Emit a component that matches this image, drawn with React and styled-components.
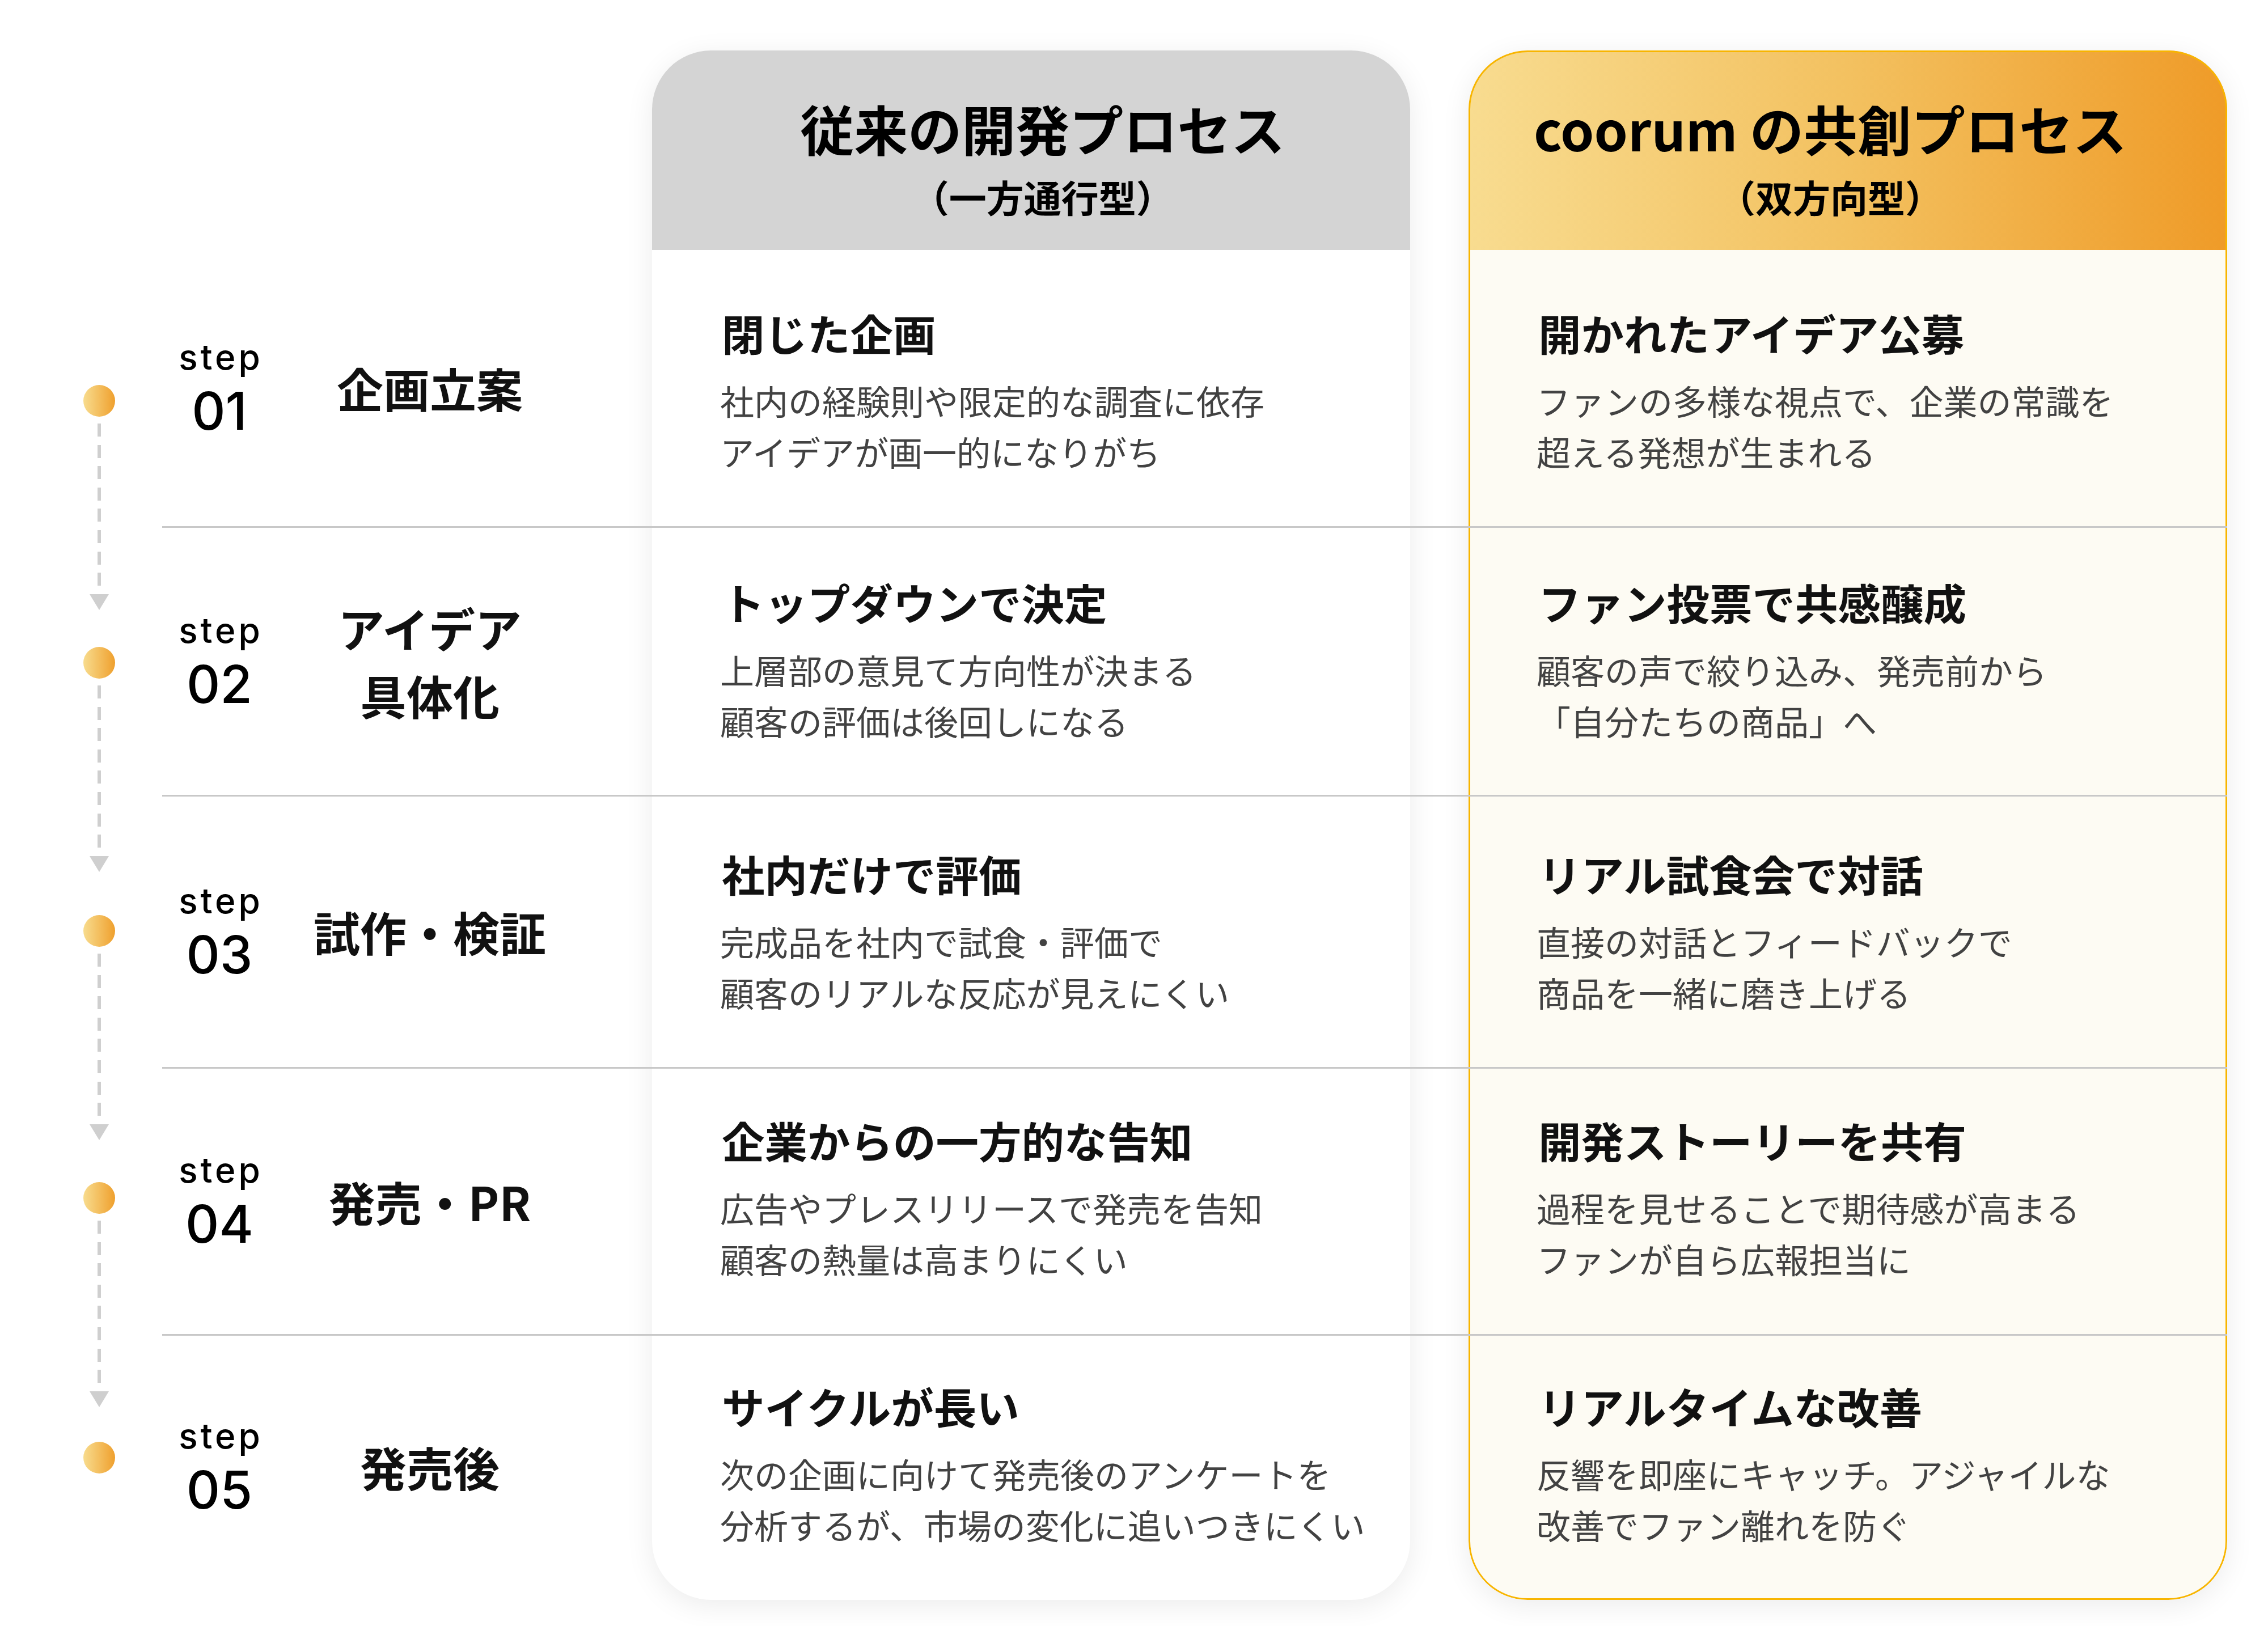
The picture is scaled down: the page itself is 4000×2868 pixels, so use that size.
import React from "react"
import styled, { createGlobalStyle } from "styled-components"

const ROWS = [352, 490, 474, 480, 471, 466]

const steps = [
    {
        no: "01",
        label: ["企画立案"],
        dotTop: 238,
        pad: 89,
        old: { title: "閉じた企画", lines: ["社内の経験則や限定的な調査に依存", "アイデアが画一的になりがち"] },
        next: { title: "開かれたアイデア公募", lines: ["ファンの多様な視点で、企業の常識を", "超える発想が生まれる"] },
    },
    {
        no: "02",
        label: ["アイデア", "具体化"],
        dotTop: 210,
        pad: 74,
        old: { title: "トップダウンで決定", lines: ["上層部の意見て方向性が決まる", "顧客の評価は後回しになる"] },
        next: { title: "ファン投票で共感醸成", lines: ["顧客の声で絞り込み、発売前から", "「自分たちの商品」へ"] },
    },
    {
        no: "03",
        label: ["試作・検証"],
        dotTop: 209,
        pad: 79,
        old: { title: "社内だけで評価", lines: ["完成品を社内で試食・評価で", "顧客のリアルな反応が見えにくい"] },
        next: { title: "リアル試食会で対話", lines: ["直接の対話とフィードバックで", "商品を一緒に磨き上げる"] },
    },
    {
        no: "04",
        label: ["発売・PR"],
        dotTop: 200,
        pad: 69,
        old: { title: "企業からの一方的な告知", lines: ["広告やプレスリリースで発売を告知", "顧客の熱量は高まりにくい"] },
        next: { title: "開発ストーリーを共有", lines: ["過程を見せることで期待感が高まる", "ファンが自ら広報担当に"] },
    },
    {
        no: "05",
        label: ["発売後"],
        dotTop: 187,
        pad: 67,
        old: { title: "サイクルが長い", lines: ["次の企画に向けて発売後のアンケートを", "分析するが、市場の変化に追いつきにくい"] },
        next: { title: "リアルタイムな改善", lines: ["反響を即座にキャッチ。アジャイルな", "改善でファン離れを防ぐ"] },
    },
]

export default function App() {
    return (
        <>
            <GlobalStyle />
            <Page>
                <Board>
                    <Card $col={3}>
                        <CardHead>
                            <HeadTitle>従来の開発プロセス</HeadTitle>
                            <HeadSub>（一方通行型）</HeadSub>
                        </CardHead>
                        {steps.map(s => (
                            <Cell key={s.no} $pad={s.pad}>
                                <CellTitle>{s.old.title}</CellTitle>
                                {s.old.lines.map(l => <CellLine key={l}>{l}</CellLine>)}
                            </Cell>
                        ))}
                    </Card>

                    <Card $col={5} $accent>
                        <CardHead $accent>
                            <HeadTitle>coorum の共創プロセス</HeadTitle>
                            <HeadSub>（双方向型）</HeadSub>
                        </CardHead>
                        {steps.map(s => (
                            <Cell key={s.no} $pad={s.pad}>
                                <CellTitle>{s.next.title}</CellTitle>
                                {s.next.lines.map(l => <CellLine key={l}>{l}</CellLine>)}
                            </Cell>
                        ))}
                    </Card>

                    {steps.map((s, i) => (
                        <React.Fragment key={s.no}>
                            <Timeline $row={i + 2} $top={s.dotTop}>
                                <Dot />
                                {i < steps.length - 1 && (
                                    <>
                                        <Dash />
                                        <Arrow />
                                    </>
                                )}
                            </Timeline>
                            <StepCell $row={i + 2}>
                                <StepNo>
                                    <span>step</span>
                                    <strong>{s.no}</strong>
                                </StepNo>
                                <StepLabel>
                                    {s.label.map(l => <span key={l}>{l}</span>)}
                                </StepLabel>
                            </StepCell>
                            {i < steps.length - 1 && <Rule $row={i + 2} />}
                        </React.Fragment>
                    ))}
                </Board>
            </Page>
        </>
    )
}

const GlobalStyle = createGlobalStyle`
    html, body{
        margin: 0;
        padding: 0;
        background: #fff;
    }
    body{
        font-family: "Noto Sans CJK JP", "Noto Sans", sans-serif;
        color: #111;
    }
`

const Page = styled.main`
    width: 4000px;
    height: 2868px;
    padding-top: 89px;
    box-sizing: border-box;
`

const Board = styled.div`
    display: grid;
    grid-template-columns: 286px 864px 1337px 103px 1338px;
    grid-template-rows: ${ROWS.map(r => r + "px").join(" ")};
`

const Card = styled.section`
    grid-column: ${p => p.$col};
    grid-row: 1 / -1;
    position: relative;
    display: grid;
    grid-template-rows: ${ROWS.map(r => r + "px").join(" ")};
    border-radius: 104px;
    overflow: hidden;
    background: ${p => p.$accent ? "#fdfbf3" : "#fff"};
    box-shadow: 0 10px 50px rgba(0, 0, 0, 0.08);
    z-index: 1;

    &::after{
        content: "";
        display: ${p => p.$accent ? "block" : "none"};
        position: absolute;
        inset: 0;
        border: 3px solid #f8b500;
        border-radius: inherit;
        pointer-events: none;
    }
`

const CardHead = styled.header`
    display: flex;
    flex-direction: column;
    align-items: center;
    padding: 75px ${p => p.$accent ? "62px" : "0"} 0 0;
    box-sizing: border-box;
    background: ${p => p.$accent ? "linear-gradient(90deg, #f8dc90 0%, #f3c160 50%, #ef9b28 100%)" : "#d4d4d4"};
    font-weight: 700;
    color: #000;
`

const HeadTitle = styled.h2`
    margin: 0 0 16px;
    font-size: 95px;
    line-height: 1.3;
    font-weight: 700;
    white-space: nowrap;
`

const HeadSub = styled.p`
    margin: 0;
    font-size: 66px;
    line-height: 1.3;
    font-weight: 700;
    white-space: nowrap;
`

const Cell = styled.div`
    display: flex;
    flex-direction: column;
    justify-content: flex-start;
    padding: ${p => p.$pad}px 120px 0;
`

const CellTitle = styled.h3`
    margin: 0 0 18px 3px;
    font-size: 75.5px;
    line-height: 1.5;
    font-weight: 700;
    color: #111;
    white-space: nowrap;
`

const CellLine = styled.p`
    margin: 0;
    font-size: 60px;
    line-height: 1.5;
    font-weight: 400;
    color: #424242;
    white-space: nowrap;
`

const Timeline = styled.div`
    grid-column: 1;
    grid-row: ${p => p.$row};
    display: flex;
    flex-direction: column;
    align-items: center;
    padding: ${p => p.$top}px 0 0 64px;
    box-sizing: border-box;
    z-index: 2;
`

const Dot = styled.span`
    flex: none;
    width: 56px;
    height: 56px;
    border-radius: 50%;
    background: linear-gradient(90deg, #f8dc8e 0%, #efa02e 100%);
`

const Dash = styled.span`
    flex: none;
    width: 6px;
    height: 286px;
    margin-top: 12px;
    background: repeating-linear-gradient(180deg, #cfcfcf 0 23px, transparent 23px 37.6px);
`

const Arrow = styled.span`
    flex: none;
    width: 0;
    height: 0;
    margin-top: 15px;
    border-left: 17px solid transparent;
    border-right: 17px solid transparent;
    border-top: 28px solid #cfcfcf;
`

const StepCell = styled.div`
    grid-column: 2;
    grid-row: ${p => p.$row};
    display: grid;
    grid-template-columns: 202px 540px;
    align-items: center;
    padding-bottom: 3px;
`

const StepNo = styled.div`
    display: flex;
    flex-direction: column;
    align-items: center;
    font-family: Inter, "Noto Sans", sans-serif;
    color: #000;

    span{
        font-size: 62px;
        font-weight: 500;
        line-height: 1;
        letter-spacing: 5px;
        margin-right: -5px;
    }

    strong{
        margin-top: 18px;
        font-size: 92px;
        font-weight: 500;
        line-height: 1;
    }
`

const StepLabel = styled.div`
    display: flex;
    flex-direction: column;
    align-items: center;
    font-size: 82px;
    line-height: 1.45;
    font-weight: 700;
    color: #111;
    white-space: nowrap;
`

const Rule = styled.hr`
    grid-column: 2 / -1;
    grid-row: ${p => p.$row};
    align-self: end;
    width: 100%;
    height: 3px;
    margin: 0;
    border: 0;
    background: #c8c8c8;
    z-index: 3;
`
